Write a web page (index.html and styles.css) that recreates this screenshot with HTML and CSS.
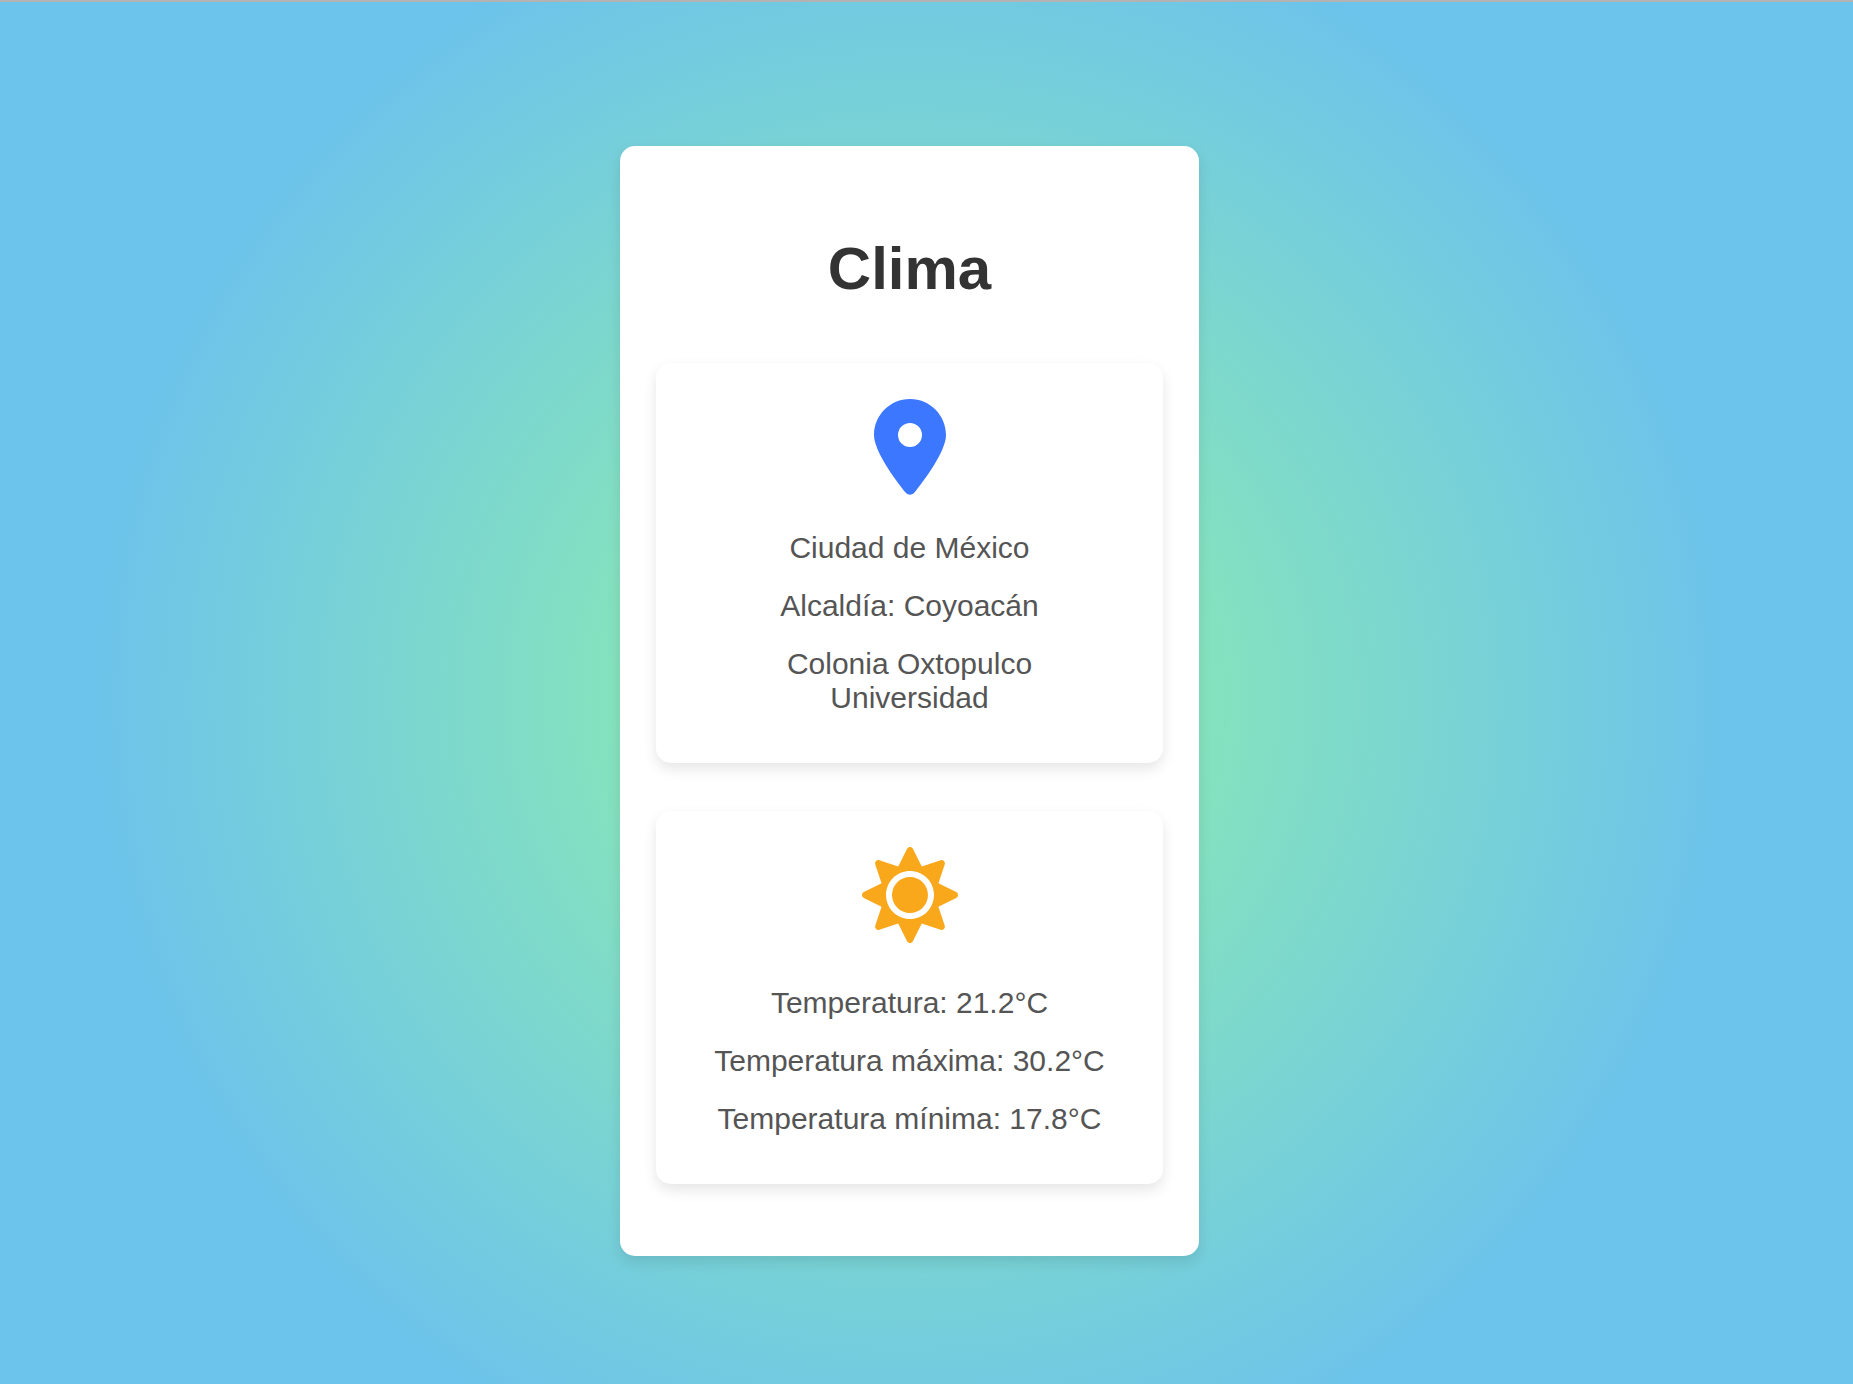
FILE: index.html
```html
<!DOCTYPE html>
<html lang="es">
<head>
  <meta charset="utf-8">
  <meta name="viewport" content="width=device-width, initial-scale=1">
  <title>Clima</title>
  <link rel="stylesheet" href="styles.css">
</head>
<body>
  <main class="weather">
    <h1 class="weather-title">Clima</h1>
    <section class="panel panel-location">
      <svg class="icon icon-pin" viewBox="0 0 384 512" aria-hidden="true"><path d="M215.7 499.2C267 435 384 279.4 384 192C384 86 298 0 192 0S0 86 0 192c0 87.4 117 243 168.3 307.2c12.3 15.3 35.1 15.3 47.4 0zM192 128a64 64 0 1 1 0 128 64 64 0 1 1 0-128z"/></svg>
      <p>Ciudad de México</p>
      <p>Alcaldía: Coyoacán</p>
      <p>Colonia Oxtopulco Universidad</p>
    </section>
    <section class="panel panel-temperature">
      <svg class="icon icon-sun" viewBox="0 0 512 512" aria-hidden="true"><path d="M256 160c-52.9 0-96 43.1-96 96s43.1 96 96 96 96-43.1 96-96-43.1-96-96-96zm246.4 80.5l-94.7-47.3 33.5-100.4c4.5-13.6-8.4-26.5-21.9-21.9l-100.4 33.5-47.4-94.8c-6.4-12.8-24.6-12.8-31 0l-47.3 94.7L92.7 70.8c-13.6-4.5-26.5 8.4-21.9 21.9l33.5 100.4-94.7 47.4c-12.8 6.4-12.8 24.6 0 31l94.7 47.3-33.5 100.5c-4.5 13.6 8.4 26.5 21.9 21.9l100.4-33.5 47.3 94.7c6.4 12.8 24.6 12.8 31 0l47.3-94.7 100.4 33.5c13.6 4.5 26.5-8.4 21.9-21.9l-33.5-100.4 94.7-47.3c13-6.5 13-24.7.2-31.1zm-155.9 106c-49.9 49.9-131.1 49.9-181 0-49.9-49.9-49.9-131.1 0-181 49.9-49.9 131.1-49.9 181 0 49.9 49.9 49.9 131.1 0 181z"/></svg>
      <p>Temperatura: 21.2°C</p>
      <p>Temperatura máxima: 30.2°C</p>
      <p>Temperatura mínima: 17.8°C</p>
    </section>
  </main>
</body>
</html>
```
FILE: styles.css
```css
* {
  box-sizing: border-box;
}

body {
  min-height: 100vh;
  margin: 0;
  padding: 144px 34px 128px 0;
  display: flex;
  justify-content: center;
  align-items: flex-start;
  border-top: 2px solid #b3b3b3;
  background: radial-gradient(circle 820px at calc(50% - 17px) 699px, #93f4a5, #6cc3eb) no-repeat #6cc3eb;
  font-family: Arial, "Liberation Sans", sans-serif;
  color: #555;
}

.weather {
  width: 100%;
  max-width: 579px;
  padding: 48px 36px;
  display: flex;
  flex-direction: column;
  border-radius: 15px;
  background: #fff;
  box-shadow: 0 6px 14px rgba(0, 0, 0, 0.1);
  text-align: center;
}

.weather-title {
  margin: 40px 0 36px;
  font-size: 60px;
  line-height: 69px;
  color: #333;
}

.panel {
  margin: 24px 0;
  padding: 36px;
  display: flex;
  flex-direction: column;
  align-items: center;
  border-radius: 15px;
  background: #fff;
  box-shadow: 0 6px 14px rgba(0, 0, 0, 0.1);
}

.panel p {
  margin: 12px 20px;
  font-size: 30px;
  line-height: 34px;
}

.icon {
  height: 96px;
  margin-bottom: 24px;
  fill: currentColor;
}

.icon-pin {
  width: 72px;
  color: #3b77ff;
}

.icon-sun {
  width: 96px;
  margin-bottom: 31px;
  color: #faa81b;
}
```
